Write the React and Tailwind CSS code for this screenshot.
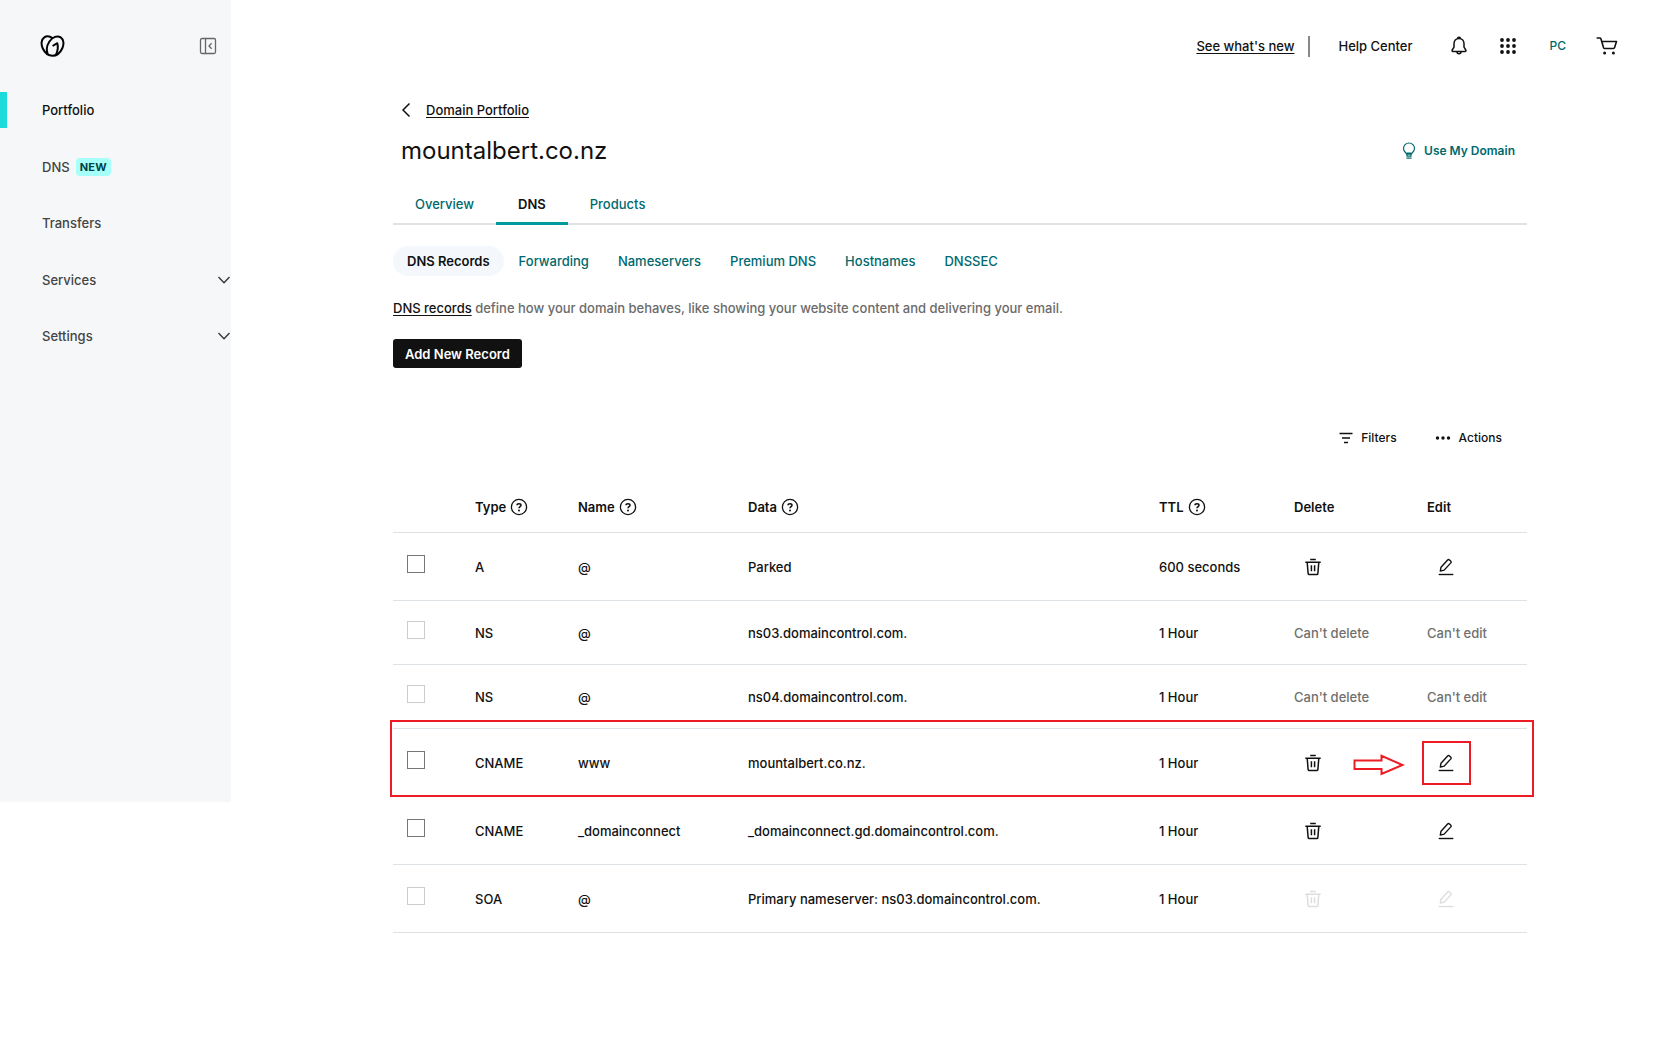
const HIGHLIGHT = 'www';

const records = [
  { type: 'A', name: '@', data: 'Parked', ttl: '600 seconds', state: 'editable' },
  { type: 'NS', name: '@', data: 'ns03.domaincontrol.com.', ttl: '1 Hour', state: 'locked' },
  { type: 'NS', name: '@', data: 'ns04.domaincontrol.com.', ttl: '1 Hour', state: 'locked' },
  { type: 'CNAME', name: 'www', data: 'mountalbert.co.nz.', ttl: '1 Hour', state: 'editable' },
  { type: 'CNAME', name: '_domainconnect', data: '_domainconnect.gd.domaincontrol.com.', ttl: '1 Hour', state: 'editable' },
  { type: 'SOA', name: '@', data: 'Primary nameserver: ns03.domaincontrol.com.', ttl: '1 Hour', state: 'disabled' },
];

function Logo() {
  return (
    <svg width="25" height="22" viewBox="0 0 25 22" fill="none" stroke="#000" strokeWidth="2" strokeLinejoin="round" aria-hidden="true">
      <path d="M12.800 3.300C10 1.300 6.600 .8 4.300 2.300C1 4.500 .9 9.600 2.800 13.500C4.800 17.800 8.800 20.800 12.500 20.800C16.200 20.800 20.200 17.800 22.200 13.500C24.100 9.600 24 4.500 20.700 2.300C17.400 .3 12.600 1.900 9.400 6.500C6.700 10.500 6.200 15.200 7.700 19" />
      <path d="M12.600 11L17.300 8.200C18.200 11.600 18 15.600 15.900 19.600" />
    </svg>
  );
}

function CollapseIcon() {
  return (
    <svg width="18" height="18" viewBox="0 0 18 18" fill="none" stroke="#666" strokeWidth="1.300" aria-hidden="true">
      <rect x="1.500" y="1.500" width="15" height="15" rx="1.500" />
      <path d="M6.500 1.500v15M12.600 6.200L10 9l2.600 2.800" />
    </svg>
  );
}

function ChevronDown() {
  return (
    <svg width="14" height="8" viewBox="0 0 14 8" fill="none" stroke="#333" strokeWidth="1.300" aria-hidden="true">
      <path d="M1.500 1L7 6.700L12.500 1" />
    </svg>
  );
}

function BellIcon() {
  return (
    <svg width="18" height="20" viewBox="0 0 18 20" fill="none" stroke="#111" strokeWidth="1.500" strokeLinejoin="round" aria-hidden="true">
      <path d="M9 2.500C5.800 2.500 4 5 4 7.800v3.400L2.200 14c-.4.700-.1 1.400.7 1.400h12.200c.8 0 1.100-.7.7-1.400L14 11.200V7.800C14 5 12.200 2.500 9 2.500z" />
      <path d="M7.600 2.300a1.500 1.500 0 0 1 2.800 0M7 15.800a2 2 0 0 0 4 0" />
    </svg>
  );
}

function AppsIcon() {
  const stops = [2, 8, 14];
  return (
    <svg width="16" height="16" viewBox="0 0 16 16" fill="#111" aria-hidden="true">
      {stops.map((y) => stops.map((x) => <circle key={`${x}-${y}`} cx={x} cy={y} r="1.900" />))}
    </svg>
  );
}

function CartIcon() {
  return (
    <svg width="22" height="20" viewBox="0 0 22 20" fill="none" stroke="#111" strokeWidth="1.600" strokeLinejoin="round" strokeLinecap="round" aria-hidden="true">
      <path d="M1.200 2h2.600c.6 0 .9.300 1.100.8l2.700 8.900c.2.500.5.800 1 .8h8.800c.6 0 1-.3 1.100-.8L20.500 5.500H5.800" />
      <circle cx="8.600" cy="17" r="1.500" fill="#111" stroke="none" />
      <circle cx="17.400" cy="17" r="1.500" fill="#111" stroke="none" />
    </svg>
  );
}

function BulbIcon() {
  return (
    <svg width="14" height="18" viewBox="0 0 14 18" fill="none" stroke="currentColor" strokeWidth="1.200" aria-hidden="true">
      <path d="M4.600 12.200C4.400 10.700 1.500 9.600 1.500 6.500a5.500 5.500 0 0 1 11 0c0 3.100-2.900 4.200-3.100 5.700zM4.600 11.200h4.800M5 12.200v1.900h4v-1.900M4.500 16.200h5" />
    </svg>
  );
}

function FilterIcon() {
  return (
    <svg width="14" height="12" viewBox="0 0 14 12" fill="none" stroke="#111" strokeWidth="1.400" aria-hidden="true">
      <path d="M.5 1.500h13M3 6h8M5 10.500h4" />
    </svg>
  );
}

function DotsIcon() {
  return (
    <svg width="16" height="4" viewBox="0 0 16 4" fill="#111" aria-hidden="true">
      <circle cx="2.500" cy="2" r="1.700" />
      <circle cx="8" cy="2" r="1.700" />
      <circle cx="13.500" cy="2" r="1.700" />
    </svg>
  );
}

function HelpIcon() {
  return (
    <svg className="block" width="18" height="18" viewBox="0 0 18 18" fill="none" stroke="#111" strokeWidth="1.300" aria-hidden="true">
      <circle cx="9" cy="9" r="7.600" />
      <path d="M7 7.300C7 5.200 11 5.200 11 7.300C11 8.600 9 8.700 9 10.300" strokeWidth="1.500" />
      <circle cx="9" cy="12.400" r="1" fill="#111" stroke="none" />
    </svg>
  );
}

function TrashIcon() {
  return (
    <svg width="18" height="18" viewBox="0 0 18 18" fill="none" stroke="currentColor" strokeWidth="1.500" aria-hidden="true">
      <path d="M6.200 1.500h5.600M1.300 4.300h15.400M3.200 4.300l.9 11c.1.900.6 1.300 1.300 1.300h7.200c.7 0 1.200-.4 1.300-1.300l.9-11M7.400 7.300v6M10.600 7.300v6" />
    </svg>
  );
}

function EditIcon() {
  return (
    <svg width="18" height="18" viewBox="0 0 18 18" fill="none" stroke="currentColor" strokeWidth="1.400" strokeLinejoin="round" aria-hidden="true">
      <path d="M4 9.200L10.600 2c.5-.6 1.200-.6 1.800-.1l1.300 1.200c.6.500.6 1.200.1 1.800L7.200 12.100L3.300 13.100z" />
      <path d="M1.700 16.500h14.600" />
    </svg>
  );
}

function ArrowMark() {
  return (
    <svg className="block" width="52" height="22" viewBox="0 0 52 22" fill="#fff" stroke="#ed1c24" strokeWidth="2" aria-hidden="true">
      <path d="M1.500 6.500h27v-4.700L49.500 11L28.500 19.900v-4.900h-27z" />
    </svg>
  );
}

function Sidebar() {
  const links = ['Portfolio', 'DNS', 'Transfers'];
  const groups = ['Services', 'Settings'];
  return (
    <aside className="h-[802px] w-[231px] shrink-0 bg-[#f5f7f9]">
      <div className="flex h-[92px] items-center justify-between pr-3.5 pl-10">
        <a href="#home" aria-label="Home"><Logo /></a>
        <button type="button" aria-label="Collapse sidebar"><CollapseIcon /></button>
      </div>
      <nav className="flex h-[262px] flex-col justify-between text-[#444]">
        {links.map((label) => (
          <a
            key={label}
            href={`#${label}`}
            className={label === 'Portfolio'
              ? 'flex h-9 items-center border-l-[7px] border-[#1bdbdb] pl-[35px] text-[#111]'
              : 'flex h-9 items-center pl-[42px]'}
          >
            {label}
            {label === 'DNS' && (
              <span className="ml-1.5 rounded-sm bg-[#a6fff8] px-1 text-[11px] leading-[18px] font-bold tracking-wide text-[#004249]">NEW</span>
            )}
          </a>
        ))}
        {groups.map((label) => (
          <button key={label} type="button" className="flex h-9 items-center justify-between pl-[42px]">
            {label}
            <ChevronDown />
          </button>
        ))}
      </nav>
    </aside>
  );
}

function TopBar() {
  return (
    <header className="flex h-[92px] items-center justify-end pr-[42px]">
      <a href="#new" className="underline underline-offset-2">See what's new</a>
      <span className="ml-3.5 h-[21px] w-0.5 bg-[#888]" />
      <a href="#help" className="ml-7">Help Center</a>
      <button type="button" aria-label="Notifications" className="ml-[37px]"><BellIcon /></button>
      <button type="button" aria-label="Apps" className="ml-8"><AppsIcon /></button>
      <button type="button" className="ml-[34px] text-xs text-[#00696d]">PC</button>
      <button type="button" aria-label="Cart" className="ml-[30px]"><CartIcon /></button>
    </header>
  );
}

function Heading({ label, help }) {
  return (
    <th scope="col" className="p-0 pt-0.5 text-left font-semibold">
      <span className="flex items-center gap-1">
        {label}
        {help && <button type="button" aria-label={`About ${label}`}><HelpIcon /></button>}
      </span>
    </th>
  );
}

function RecordRow({ record }) {
  const { type, name, data, ttl, state } = record;
  const marked = name === HIGHLIGHT;
  const locked = state === 'locked';
  const editable = state === 'editable';
  const iconColor = editable ? 'block text-[#111]' : 'block text-[#ddd]';
  return (
    <tr className={locked ? 'h-16 border-b border-[#dce2e6] first-of-type:border-b' : 'relative h-[68px] border-b border-[#dce2e6]'}>
      <td className="p-0 pb-1 pl-3.5">
        <input
          type="checkbox"
          aria-label={`Select ${type} record ${name}`}
          disabled={!editable}
          className="block size-[18px] appearance-none border border-[#767676] bg-white disabled:border-[#ccc]"
        />
        {marked && <span className="pointer-events-none absolute -top-2 -right-[7px] -bottom-0.5 -left-[3px] border-2 border-[#ed1c24]" />}
      </td>
      <td className="p-0 pt-0.5">{type}</td>
      <td className="p-0 pt-0.5">{name}</td>
      <td className="p-0 pt-0.5">{data}</td>
      <td className="p-0 pt-0.5">{ttl}</td>
      <td className="p-0 pt-0.5">
        {locked ? <span className="text-[#6f6f6f]">Can't delete</span> : (
          <div className="relative pl-2.5">
            <button type="button" aria-label={`Delete ${name}`} disabled={!editable} className={iconColor}><TrashIcon /></button>
            {marked && <span className="pointer-events-none absolute top-0 left-[59px]"><ArrowMark /></span>}
          </div>
        )}
      </td>
      <td className="p-0 pt-0.5">
        {locked ? <span className="text-[#6f6f6f]">Can't edit</span> : (
          <div className="relative pl-2.5">
            <button type="button" aria-label={`Edit ${name}`} disabled={!editable} className={iconColor}><EditIcon /></button>
            {marked && <span className="pointer-events-none absolute -top-[13px] -left-[5px] h-11 w-[49px] border-2 border-[#ed1c24]" />}
          </div>
        )}
      </td>
    </tr>
  );
}

export default function App() {
  return (
    <div className="flex items-start bg-white font-['Inter',sans-serif] text-[13px] leading-5 font-medium text-[#111]">
      <Sidebar />
      <div className="min-w-0 flex-1">
        <TopBar />
        <main className="pr-[133px] pb-20 pl-[162px]">
          <div className="flex h-9 items-center gap-[15px] pl-2">
            <svg width="10" height="16" viewBox="0 0 10 16" fill="none" stroke="#111" strokeWidth="1.500" aria-hidden="true">
              <path d="M8.500 1.500L2 8l6.500 6.500" />
            </svg>
            <a href="#portfolio" className="underline underline-offset-2">Domain Portfolio</a>
          </div>
          <div className="flex h-[46px] items-center justify-between pr-3 pl-2">
            <h1 className="text-2xl font-normal">mountalbert.co.nz</h1>
            <a href="#use" className="flex items-center gap-2 text-xs font-semibold text-[#00696d]">
              <BulbIcon />
              Use My Domain
            </a>
          </div>
          <nav className="mt-3 flex h-[39px] border-b-2 border-[#e2e2e2] text-[#00696d]">
            <a href="#overview" className="px-[22px] py-2">Overview</a>
            <a href="#dns" aria-current="page" className="-mb-0.5 border-b-[3px] border-[#00999c] px-[22px] py-2 font-semibold text-[#111]">DNS</a>
            <a href="#products" className="px-[22px] py-2">Products</a>
          </nav>
          <nav className="mt-[21px] flex h-[30px] items-center gap-px text-[#00696d]">
            <a href="#records" aria-current="page" className="rounded-full bg-[#f4f8fc] px-3.5 py-[5px] font-semibold text-[#111]">DNS Records</a>
            {['Forwarding', 'Nameservers', 'Premium DNS', 'Hostnames', 'DNSSEC'].map((label) => (
              <a key={label} href={`#${label}`} className="px-3.5 py-[5px]">{label}</a>
            ))}
          </nav>
          <p className="mt-[22px] text-[#6b6b6b]">
            <a href="#about" className="text-[#111] underline underline-offset-2">DNS records</a> define how your domain behaves, like showing your website content and delivering your email.
          </p>
          <button type="button" className="mt-[21px] block h-[29px] rounded-[3px] bg-[#111] px-3 font-semibold text-white">Add New Record</button>
          <div className="mt-[60px] flex justify-end pr-[25px] text-xs leading-5">
            <button type="button" className="flex items-center gap-2"><FilterIcon />Filters</button>
            <button type="button" className="ml-[38px] flex items-center gap-2"><DotsIcon />Actions</button>
          </div>
          <table className="mt-8 w-full table-fixed border-collapse">
            <colgroup>
              <col className="w-[82px]" />
              <col className="w-[103px]" />
              <col className="w-[170px]" />
              <col />
              <col className="w-[135px]" />
              <col className="w-[133px]" />
              <col className="w-[100px]" />
            </colgroup>
            <thead>
              <tr className="h-[52px] border-b border-[#dce2e6]">
                <td className="p-0" />
                <Heading label="Type" help />
                <Heading label="Name" help />
                <Heading label="Data" help />
                <Heading label="TTL" help />
                <Heading label="Delete" />
                <Heading label="Edit" />
              </tr>
            </thead>
            <tbody>
              {records.map((record) => <RecordRow key={record.data} record={record} />)}
            </tbody>
          </table>
        </main>
      </div>
    </div>
  );
}
